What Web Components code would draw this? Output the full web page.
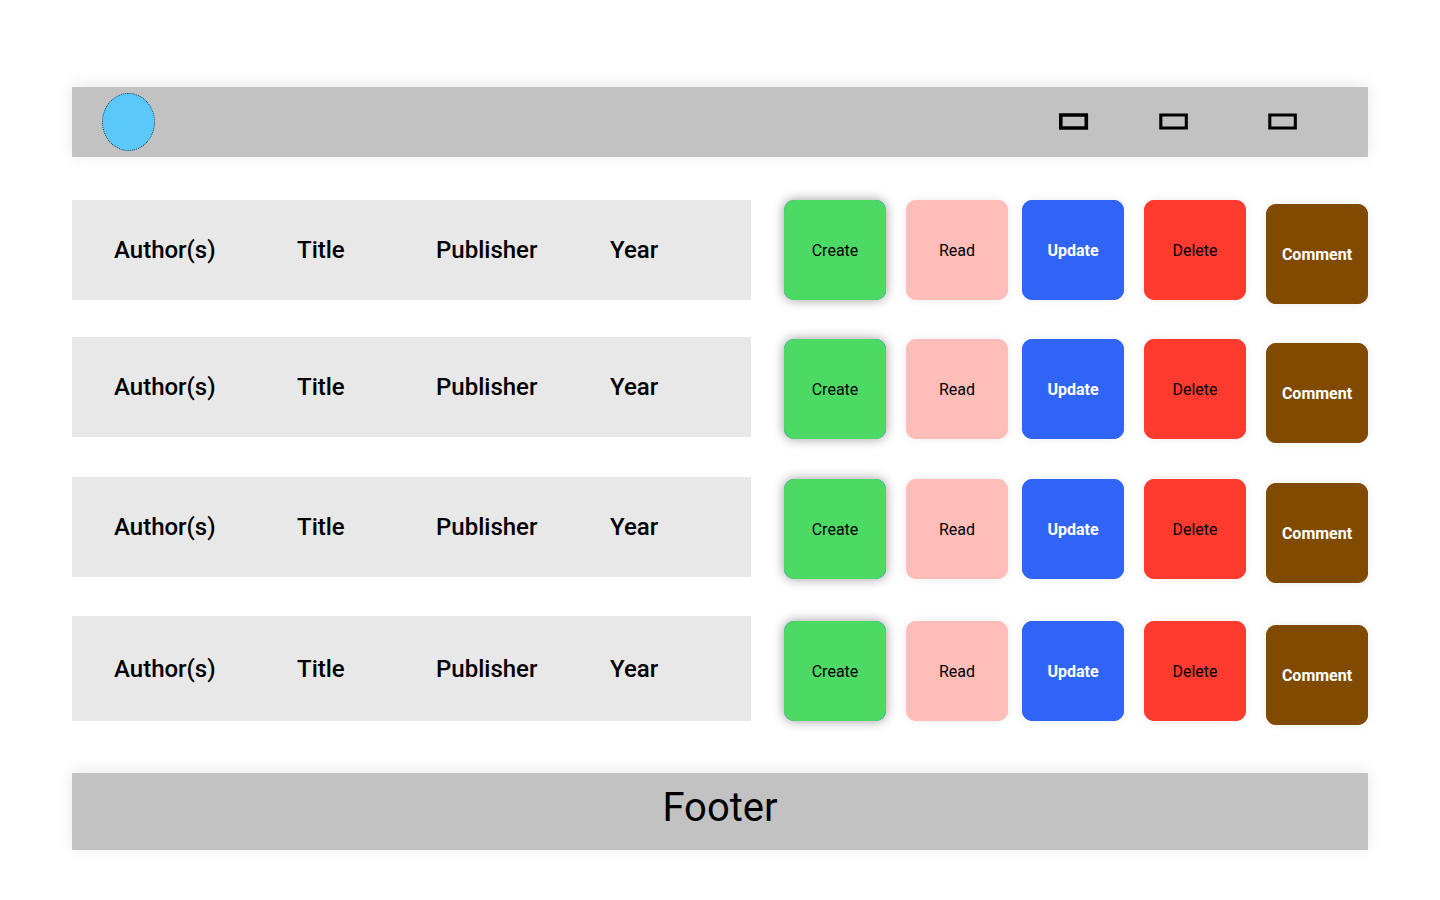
<!DOCTYPE html>
<html lang="en">
<head>
<meta charset="utf-8">
<meta name="viewport" content="width=device-width, initial-scale=1">
<title>Library records</title>
<style>
  body { margin: 0; background: #fff; color: #000; font-family: Roboto, "Liberation Sans", sans-serif; }
</style>
</head>
<body>
<library-page></library-page>

<script>
class BaseElement extends HTMLElement {
  constructor() {
    super();
    this.attachShadow({ mode: 'open' }).innerHTML = this.render();
  }
}

class SiteHeader extends BaseElement {
  render() {
    const item = (label, stroke) => `<a href="#" aria-label="${label}"><svg width="30" height="18" viewBox="0 0 30 18" aria-hidden="true"><path d="M1.8 2H27.3V15H1.8Z" fill="none" stroke="#000" stroke-width="${stroke}"/></svg></a>`;
    return `<style>
      :host { display: block; }
      header { display: flex; align-items: center; justify-content: space-between; height: 70px; box-sizing: border-box; padding: 0 70px 0 30px; background: #c2c2c2; box-shadow: 0 -2px 14px rgba(0,0,0,.1); }
      .logo { width: 53px; height: 58px; box-sizing: border-box; border: 1px dotted #333; border-radius: 50%; background: #5ac8fa; }
      nav { display: grid; grid-template-columns: 100px 109px 30px; }
      a, svg { display: block; }
    </style>
    <header><a class="logo" href="#" aria-label="Home"></a>
    <nav>${item('Catalogue', 3.6)}${item('Search', 3.1)}${item('Account', 3.1)}</nav></header>`;
  }
}

class RecordBar extends BaseElement {
  render() {
    return `<style>
      :host { display: grid; grid-template-columns: 183fr 139fr 174fr 141fr; align-items: center; height: 100px; box-sizing: border-box; padding-left: 42px; background: #e8e8e8; font-size: 24px; line-height: 28px; font-weight: 500; }
    </style>
    <span>Author(s)</span><span>Title</span><span>Publisher</span><span>Year</span>`;
  }
}

class ActionButton extends BaseElement {
  render() {
    return `<style>
      :host { display: block; width: 102px; height: 100px; }
      button { display: block; width: 100%; height: 100%; padding: 0; border: 0; border-radius: 10px; background: var(--edge, var(--fill)); color: inherit; font: inherit; box-shadow: var(--shadow, 0 0 10px rgba(0,0,0,.08)); cursor: pointer; }
      .face { display: grid; place-items: center; height: 100%; box-sizing: border-box; padding-top: 2px; border-radius: 11px; background: var(--fill); }
      :host([kind="create"]) { --fill: #4cd964; --edge: #2f7fc0; --shadow: 0 0 12px rgba(0,0,0,.4); }
      :host([kind="read"]) { --fill: #ffbdb9; }
      :host([kind="update"]) { --fill: #3064f6; color: #fff; font-weight: 700; }
      :host([kind="delete"]) { --fill: #ff3b30; }
      :host([kind="comment"]) { --fill: #804b00; color: #fff; font-weight: 700; }
    </style>
    <button type="button"><span class="face"><slot></slot></span></button>`;
  }
}

class RecordActions extends BaseElement {
  render() {
    return `<style>
      :host { display: grid; grid-template-columns: 108px 102px 108px 108px 102px; column-gap: 14px; height: 104px; font-size: 16px; line-height: 20px; }
      [kind="comment"] { align-self: end; }
    </style>
    <action-button kind="create">Create</action-button>
    <action-button kind="read">Read</action-button>
    <action-button kind="update">Update</action-button>
    <action-button kind="delete">Delete</action-button>
    <action-button kind="comment">Comment</action-button>`;
  }
}

class SiteFooter extends BaseElement {
  render() {
    return `<style>
      :host { display: block; }
      footer { box-sizing: border-box; height: 77px; padding-top: 11px; background: #c2c2c2; box-shadow: 0 -2px 14px rgba(0,0,0,.1); font-size: 40px; line-height: 48px; text-align: center; }
    </style>
    <footer>Footer</footer>`;
  }
}

class LibraryPage extends BaseElement {
  render() {
    return `<style>
      :host { display: block; padding: 87px 5% 50px; }
      main { display: flex; gap: 33px; margin: 43px 0 48px; }
      .records, .actions { display: grid; align-items: start; align-content: start; }
      .records { flex: 1; grid-template-rows: 137px 140px 139px 105px; }
      .records > :last-child { height: 105px; }
      .actions { grid-template-rows: 139px 140px 142px 104px; }
    </style>
    <site-header></site-header>
    <main>
      <div class="records">${'<record-bar></record-bar>'.repeat(4)}</div>
      <div class="actions">${'<record-actions></record-actions>'.repeat(4)}</div>
    </main>
    <site-footer></site-footer>`;
  }
}

customElements.define('site-header', SiteHeader);
customElements.define('record-bar', RecordBar);
customElements.define('action-button', ActionButton);
customElements.define('record-actions', RecordActions);
customElements.define('site-footer', SiteFooter);
customElements.define('library-page', LibraryPage);
</script>
</body>
</html>
